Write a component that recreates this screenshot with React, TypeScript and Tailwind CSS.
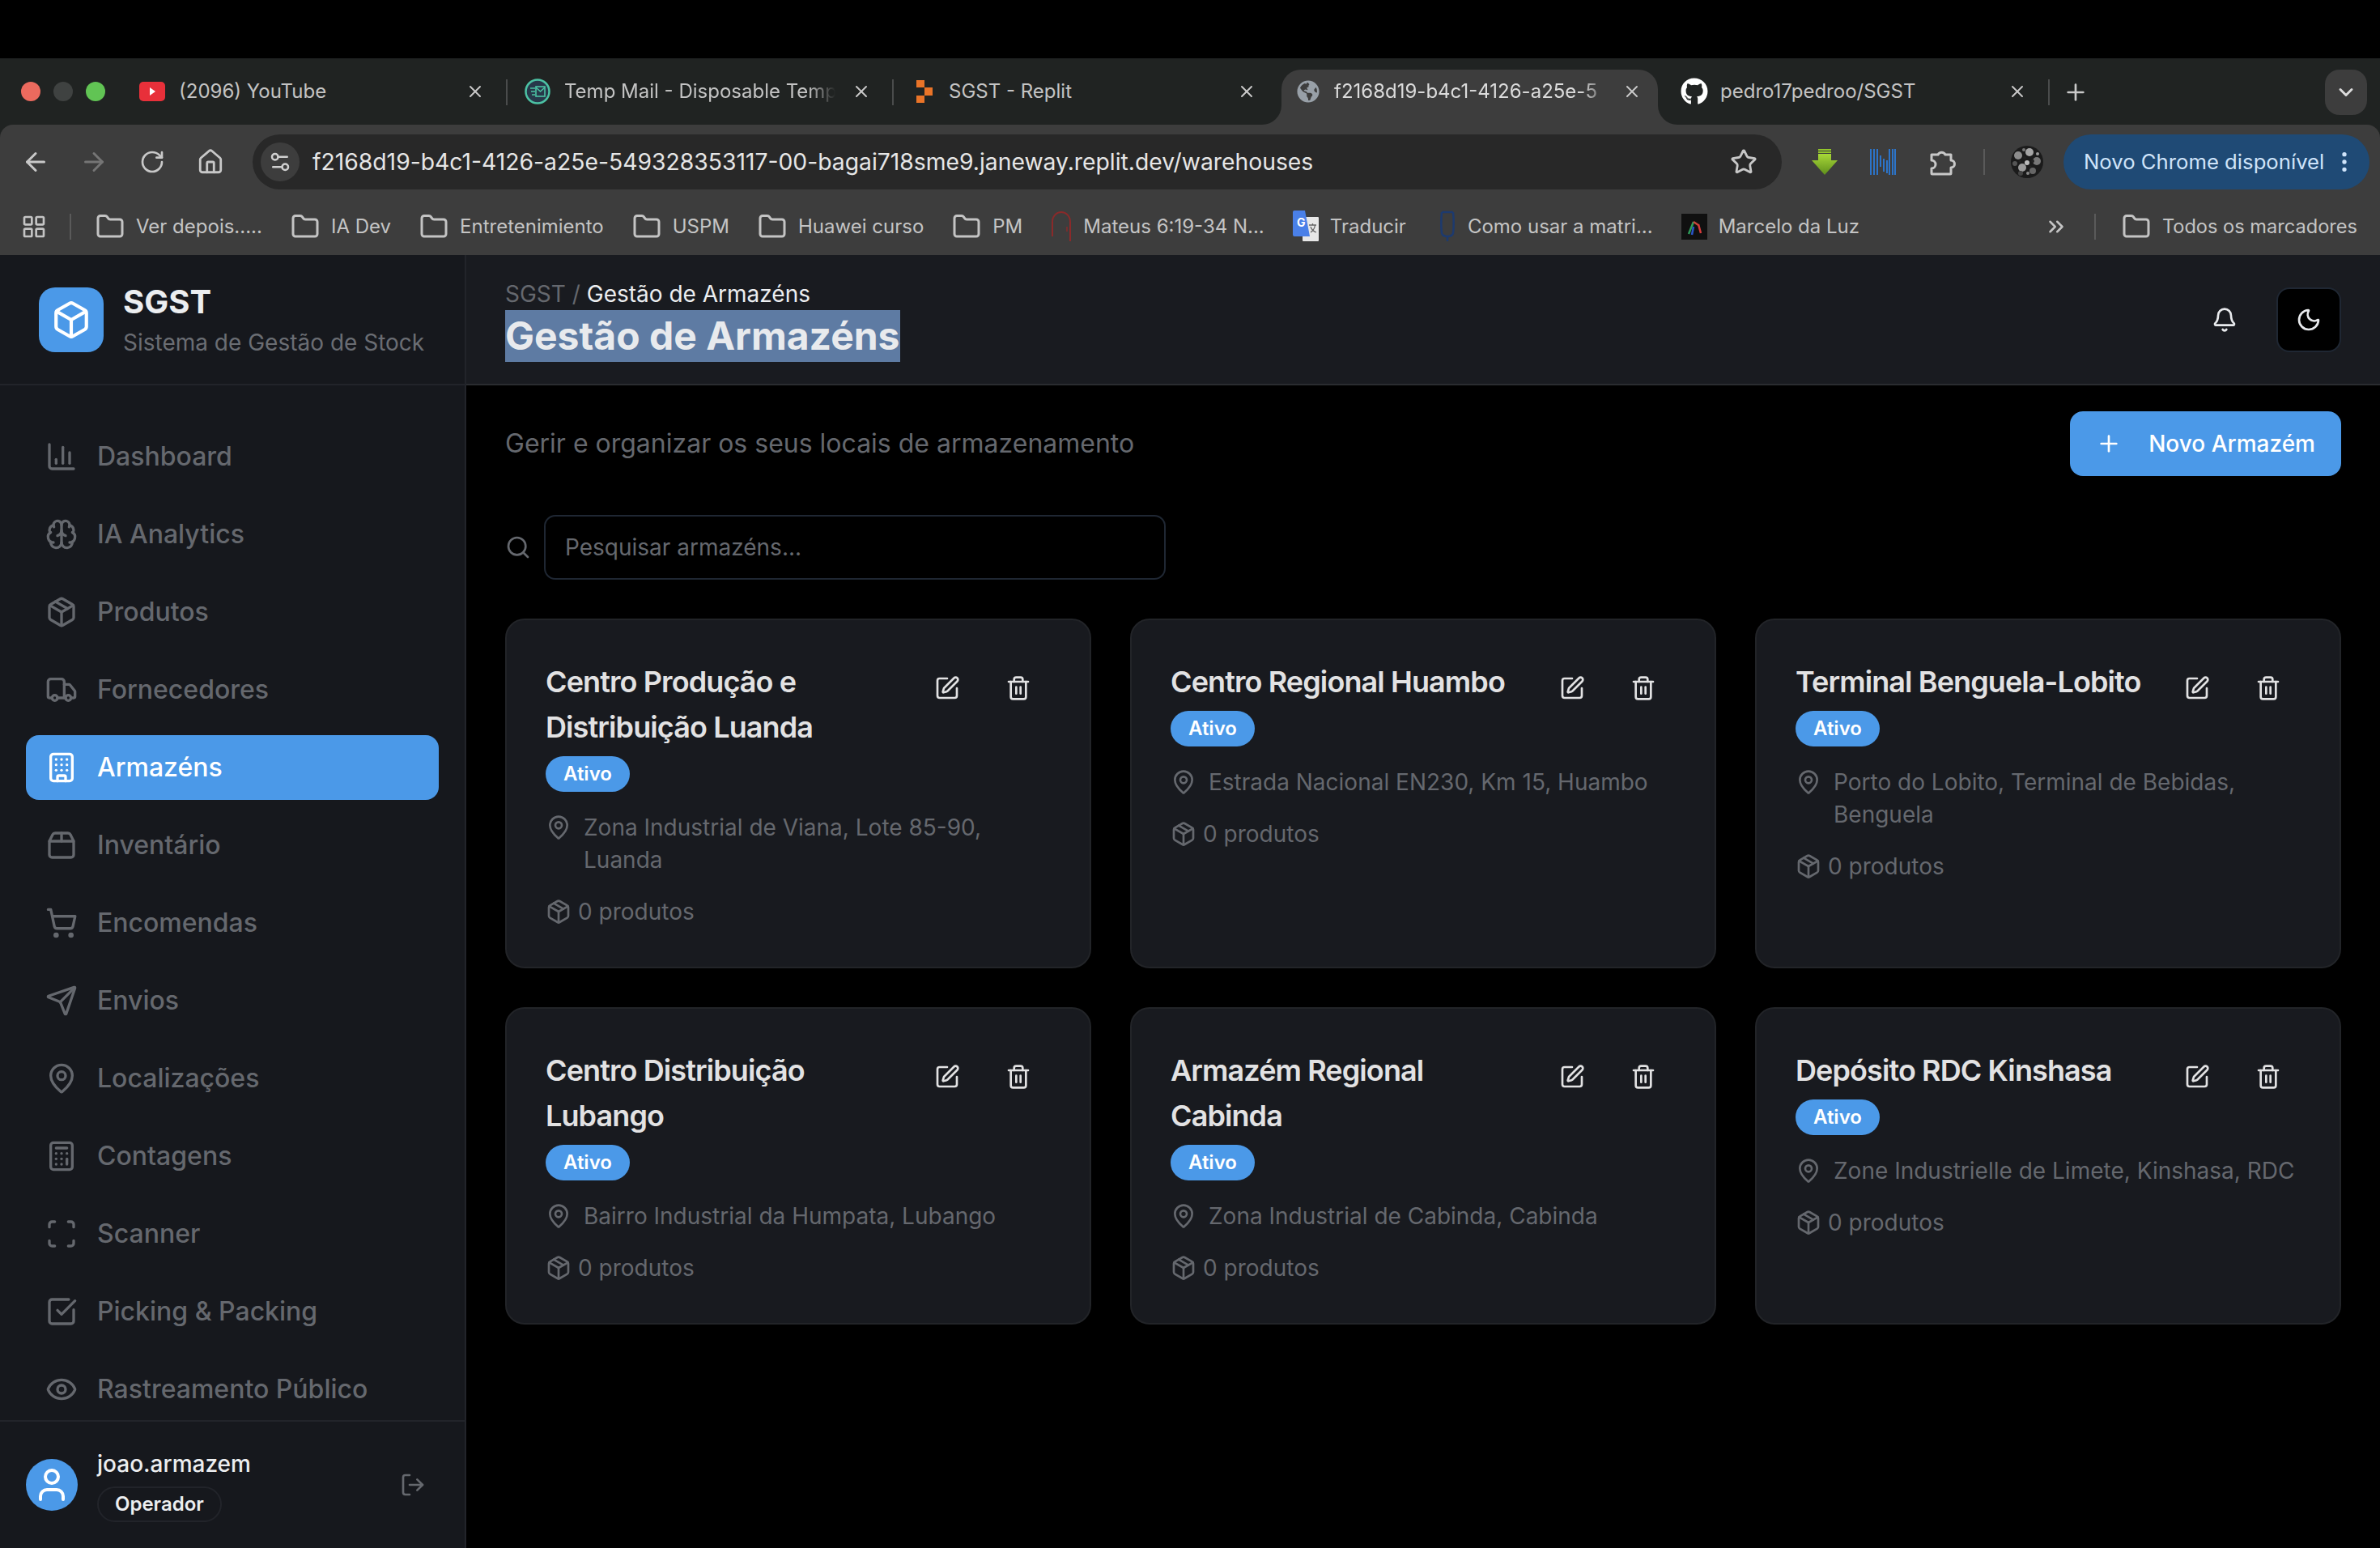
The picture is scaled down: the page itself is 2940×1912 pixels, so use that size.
import React from 'react';
import {
  ArrowLeft, ArrowRight, RotateCw, Home, Star, X, Plus, ChevronDown, EllipsisVertical,
  LayoutGrid, Folder, ChevronsRight, Settings2, Box,
  ChartColumn, Brain, Package, Truck, Building, Package2, ShoppingCart, Send, MapPin, Calculator, Scan,
  SquareCheckBig, Eye, User, LogOut, Bell, Moon, Search, SquarePen, Trash2,
} from 'lucide-react';
import { FaGithub, FaGlobeAmericas } from 'react-icons/fa';

const chromeFont = "font-['Inter','Noto_Sans',sans-serif]";

// Browser chrome

const YoutubeIcon = () => (
  <svg width="32" height="24" viewBox="0 0 32 24" className="flex-none">
    <rect width="32" height="24" rx="5" fill="#e8303a" />
    <path d="M13 7l7 5-7 5z" fill="#fff" />
  </svg>
);

const TempMailIcon = () => (
  <svg width="32" height="32" viewBox="0 0 32 32" className="flex-none">
    <circle cx="16" cy="16" r="14.5" fill="#27384a" stroke="#4cc2a4" strokeWidth="2.5" />
    <rect x="14" y="10" width="11" height="12" fill="none" stroke="#4cc2a4" strokeWidth="1.6" />
    <path d="M14 11l5.5 5 5.5-5M7 12h6M8 16h5M9 20h4" fill="none" stroke="#4cc2a4" strokeWidth="1.6" />
  </svg>
);

const ReplitIcon = () => (
  <svg width="22" height="30" viewBox="0 0 22 30" className="flex-none">
    <path d="M1 1h10v9H1zM11 10h10v10H11zM1 20h10v9H1z" fill="#ea7428" />
  </svg>
);

const GreenArrow = () => (
  <svg width="32" height="32" viewBox="0 0 32 32">
    <defs>
      <linearGradient id="arrowFill" x1="0" y1="0" x2="0" y2="1">
        <stop offset="0" stopColor="#a8d838" />
        <stop offset="1" stopColor="#5f8f1c" />
      </linearGradient>
    </defs>
    <path d="M8 0h16v2H8zM8 3h16v2H8z" fill="#93c62c" />
    <path d="M8 6h16v8h8L16 32 0 14h8z" fill="url(#arrowFill)" />
  </svg>
);

const NIcon = () => (
  <svg width="32" height="32" viewBox="0 0 32 32" fill="none" stroke="#2c74c9" strokeWidth="2">
    <path d="M1 0v32M5 0v32M9 0v32M13 8v14M17 12v16M21 14v16M24 0v32M28 0v32M31 0v32" />
  </svg>
);

const ExtensionsIcon = () => (
  <svg width="34" height="34" viewBox="0 0 34 34" fill="none" stroke="#c8c8c8" strokeWidth="3" strokeLinejoin="round">
    <path d="M3 8h8a5 5 0 0 1 9 0h7v7a4.500 4.500 0 0 1 0 9v7a1 1 0 0 1-1 1H4a1 1 0 0 1-1-1v-6a5 5 0 0 0 0-10z" />
  </svg>
);

const avatarSpecks = [
  [9, 12, 5, '#8c8c8c'], [23, 8, 5, '#a5a5a5'], [32, 19, 5, '#777'], [14, 27, 5, '#9a9a9a'], [27, 31, 4, '#666'],
  [17, 15, 2, '#222'], [27, 19, 2, '#222'], [5, 22, 3, '#555'], [20, 21, 3, '#bbb'], [12, 34, 3, '#444'],
  [33, 10, 2, '#999'], [16, 5, 2, '#777'], [21, 34, 2, '#888'], [11, 19, 1.5, '#222'], [24, 26, 1.5, '#222'],
] as const;

const ProfileAvatar = () => (
  <svg width="40" height="40" viewBox="0 0 40 40">
    <defs>
      <clipPath id="avatarClip"><circle cx="20" cy="20" r="20" /></clipPath>
    </defs>
    <g clipPath="url(#avatarClip)">
      <rect width="40" height="40" fill="#1b1b1b" />
      {avatarSpecks.map(([cx, cy, r, fill], i) => (
        <circle key={i} cx={cx} cy={cy} r={r} fill={fill} />
      ))}
    </g>
  </svg>
);

const TranslateIcon = () => (
  <svg width="32" height="40" viewBox="0 0 32 40" className="flex-none">
    <rect x="12" y="8" width="20" height="30" rx="1" fill="#e8e8e8" />
    <path d="M0 2a2 2 0 0 1 2-2h13l6 32H2a2 2 0 0 1-2-2z" fill="#4a80e8" />
    <text x="5" y="20" fontSize="14" fontWeight="700" fill="#fff" fontFamily="Inter, sans-serif">G</text>
    <path d="M20 18h9M24.5 16v2M22 27c3-2 5-5 5.500-9M22 20c1 3 4 6 7 7" stroke="#666" strokeWidth="1.300" fill="none" />
  </svg>
);

const RedArc = () => (
  <svg width="26" height="40" viewBox="0 0 26 40" className="flex-none" fill="none">
    <path d="M2 32V14C2 7 7 2 13 2s11 5 11 12v24" stroke="#8a2a2a" strokeWidth="2" />
    <path d="M20 20v6" stroke="#8a2a2a" strokeWidth="1.500" />
  </svg>
);

const BlueMark = () => (
  <svg width="22" height="40" viewBox="0 0 22 40" className="ml-[5px] flex-none" fill="none">
    <path d="M4 2h14M4 2C3 12 3 20 4 28c1 3 4 4 7 4s6-1 7-4c1-8 1-16 0-26M11 32v6" stroke="#1d3a6e" strokeWidth="2.500" />
  </svg>
);

const MarceloIcon = () => (
  <svg width="32" height="32" viewBox="0 0 32 32" className="flex-none">
    <rect width="32" height="32" fill="#101010" />
    <path d="M9 25l6-15" stroke="#2e9c5a" strokeWidth="2.500" />
    <path d="M15 10l6 4" stroke="#c9463a" strokeWidth="2.500" />
    <path d="M21 13l3 11" stroke="#d83c3c" strokeWidth="2.500" />
    <path d="M15 16l-2 10" stroke="#2a55c9" strokeWidth="2.500" />
  </svg>
);

type TabProps = {
  icon: React.ReactNode;
  title: string;
  widthClass: string;
  padClass: string;
  gapClass: string;
  closePadClass: string;
  fade?: boolean;
  active?: boolean;
};

const Tab = ({ icon, title, widthClass, padClass, gapClass, closePadClass, fade, active }: TabProps) => (
  <div className={`relative flex h-[68px] flex-none items-center pb-[14px] ${widthClass} ${padClass} ${active ? 'rounded-t-[24px] bg-[#3d3d3d]' : ''}`}>
    {active && (
      <>
        <div className="absolute bottom-0 left-[-24px] h-[24px] w-[24px] bg-[#3d3d3d]">
          <div className="h-full w-full rounded-br-[24px] bg-[#202322]" />
        </div>
        <div className="absolute bottom-0 right-[-24px] h-[24px] w-[24px] bg-[#3d3d3d]">
          <div className="h-full w-full rounded-bl-[24px] bg-[#202322]" />
        </div>
      </>
    )}
    <div className={`flex min-w-0 flex-1 items-center ${gapClass}`}>
      {icon}
      <span className={`min-w-0 flex-1 whitespace-nowrap text-[24px] leading-[32px] ${active ? 'text-[#dcdcdc]' : 'text-[#c4c4c4]'} ${fade ? '[mask-image:linear-gradient(to_right,black_90%,transparent)]' : ''}`}>
        {title}
      </span>
    </div>
    <X size={24} strokeWidth={2} className={`flex-none text-[#c9c9c9] ${closePadClass}`} />
  </div>
);

const TabSeparator = () => <div className="mb-[24px] h-[32px] w-[2px] flex-none bg-[#4a4c4c]" />;

const TabStrip = () => (
  <div className="flex h-[82px] flex-none items-end bg-[#202322]">
    <div className="flex h-[68px] w-[156px] flex-none items-center pb-[14px] pl-[26px]">
      <div className="h-[24px] w-[24px] rounded-full bg-[#ec6a5e]" />
      <div className="ml-[16px] h-[24px] w-[24px] rounded-full bg-[#3f4241]" />
      <div className="ml-[16px] h-[24px] w-[24px] rounded-full bg-[#61c454]" />
    </div>
    <Tab icon={<YoutubeIcon />} title="(2096) YouTube" widthClass="w-[469px]" padClass="pl-[16px]" gapClass="gap-[17px]" closePadClass="mr-[26px]" />
    <TabSeparator />
    <Tab icon={<TempMailIcon />} title="Temp Mail - Disposable Temp" widthClass="w-[475px]" padClass="pl-[21px]" gapClass="gap-[17px]" closePadClass="ml-[20px] mr-[26px]" fade />
    <TabSeparator />
    <Tab icon={<ReplitIcon />} title="SGST - Replit" widthClass="w-[479px]" padClass="pl-[27px]" gapClass="gap-[19px]" closePadClass="mr-[31px]" />
    <Tab icon={<FaGlobeAmericas size={28} className="flex-none text-[#98a0a8]" />} title="f2168d19-b4c1-4126-a25e-5" widthClass="w-[465px]" padClass="pl-[19px]" gapClass="gap-[18px]" closePadClass="ml-[16px] mr-[20px]" fade active />
    <Tab icon={<FaGithub size={34} className="flex-none text-white" />} title="pedro17pedroo/SGST" widthClass="w-[482px]" padClass="pl-[28px]" gapClass="gap-[15px]" closePadClass="mr-[26px]" />
    <TabSeparator />
    <Plus size={32} strokeWidth={2} className="mb-[24px] ml-[16px] flex-none text-[#c9c9c9]" />
    <div className="mb-[12px] ml-auto mr-[16px] flex h-[56px] w-[52px] flex-none items-center justify-center rounded-[18px] bg-[#3d3d3d]">
      <ChevronDown size={28} strokeWidth={2.500} className="text-[#dcdcdc]" />
    </div>
  </div>
);

const AddressRow = () => (
  <div className="flex h-[68px] items-center pl-[26px] pr-[12px]">
    <ArrowLeft size={36} className="flex-none text-[#c8c8c8]" />
    <ArrowRight size={36} className="ml-[36px] flex-none text-[#757575]" />
    <RotateCw size={32} className="ml-[38px] flex-none text-[#c8c8c8]" />
    <Home size={34} className="ml-[39px] flex-none text-[#c8c8c8]" />
    <div className="ml-[35px] flex h-[68px] w-[1889px] flex-none items-center rounded-full bg-[#282828] pl-[10px]">
      <div className="flex h-[48px] w-[48px] flex-none items-center justify-center rounded-full bg-[#3d3d3d]">
        <Settings2 size={30} className="text-[#d0d0d0]" />
      </div>
      <span className="ml-[16px] flex-1 whitespace-nowrap text-[28.3px] text-[#e6e6e6]">
        f2168d19-b4c1-4126-a25e-549328353117-00-bagai718sme9.janeway.replit.dev/warehouses
      </span>
      <Star size={34} className="mr-[30px] flex-none text-[#c8c8c8]" />
    </div>
    <div className="ml-[37px] flex-none"><GreenArrow /></div>
    <div className="ml-[40px] flex-none"><NIcon /></div>
    <div className="ml-[41px] flex-none"><ExtensionsIcon /></div>
    <div className="ml-[33px] h-[32px] w-[2px] flex-none bg-[#5a5a5a]" />
    <div className="ml-[32px] flex-none"><ProfileAvatar /></div>
    <div className="ml-[25px] flex h-[68px] w-[378px] flex-none items-center rounded-full bg-[#1f4a75] pl-[25px]">
      <span className="whitespace-nowrap text-[25.7px] text-[#cfe4fa]">Novo Chrome disponível</span>
      <EllipsisVertical size={32} className="ml-auto mr-[15px] flex-none text-[#cfe4fa]" />
    </div>
  </div>
);

const bookmarks: { icon: React.ReactNode; label: string }[] = [
  { icon: <Folder size={36} />, label: 'Ver depois.....' },
  { icon: <Folder size={36} />, label: 'IA Dev' },
  { icon: <Folder size={36} />, label: 'Entretenimiento' },
  { icon: <Folder size={36} />, label: 'USPM' },
  { icon: <Folder size={36} />, label: 'Huawei curso' },
  { icon: <Folder size={36} />, label: 'PM' },
  { icon: <RedArc />, label: 'Mateus 6:19-34 N...' },
  { icon: <TranslateIcon />, label: 'Traducir' },
  { icon: <BlueMark />, label: 'Como usar a matri...' },
  { icon: <MarceloIcon />, label: 'Marcelo da Luz' },
];

const BookmarksRow = () => (
  <div className="flex h-[81px] items-center pl-[26px] pr-[28px] pt-[10px] text-[#c4c4c4]">
    <LayoutGrid size={32} className="flex-none" />
    <div className="ml-[28px] h-[32px] w-[2px] flex-none bg-[#5a5a5a]" />
    <div className="ml-[30px] flex items-center gap-[35px]">
      {bookmarks.map((b) => (
        <div key={b.label} className="flex flex-none items-center gap-[14px]">
          {b.icon}
          <span className="whitespace-nowrap text-[24px] leading-[32px]">{b.label}</span>
        </div>
      ))}
    </div>
    <ChevronsRight size={30} className="ml-auto flex-none" />
    <div className="ml-[32px] h-[32px] w-[2px] flex-none bg-[#5a5a5a]" />
    <div className="ml-[32px] flex flex-none items-center gap-[14px]">
      <Folder size={36} />
      <span className="whitespace-nowrap text-[23.6px] leading-[32px]">Todos os marcadores</span>
    </div>
  </div>
);

// App

const navItems = [
  { label: 'Dashboard', icon: ChartColumn },
  { label: 'IA Analytics', icon: Brain },
  { label: 'Produtos', icon: Package },
  { label: 'Fornecedores', icon: Truck },
  { label: 'Armazéns', icon: Building, active: true },
  { label: 'Inventário', icon: Package2 },
  { label: 'Encomendas', icon: ShoppingCart },
  { label: 'Envios', icon: Send },
  { label: 'Localizações', icon: MapPin },
  { label: 'Contagens', icon: Calculator },
  { label: 'Scanner', icon: Scan },
  { label: 'Picking & Packing', icon: SquareCheckBig },
  { label: 'Rastreamento Público', icon: Eye },
];

const Sidebar = () => (
  <aside className="flex h-full w-[576px] flex-none flex-col border-r-2 border-[#22242a] bg-[#16181d]">
    <div className="flex h-[161px] flex-none items-center gap-[24px] border-b-2 border-[#22242a] px-[48px]">
      <div className="flex h-[80px] w-[80px] flex-none items-center justify-center rounded-[20px] bg-[#4b99e8]">
        <Box size={50} className="text-white" />
      </div>
      <div className="mt-[2px]">
        <h1 className="text-[40px] font-bold leading-[48px] text-[#eceef0]">SGST</h1>
        <p className="mt-[6px] text-[28px] leading-[40px] text-[#6a6d73]">Sistema de Gestão de Stock</p>
      </div>
    </div>
    <nav className="min-h-0 flex-1 space-y-[16px] overflow-hidden px-[32px] pt-[48px]">
      {navItems.map(({ label, icon: Icon, active }) => (
        <div
          key={label}
          className={`flex h-[80px] items-center gap-[24px] rounded-[16px] px-[24px] text-[32px] font-medium ${active ? 'bg-[#4b99e8] text-white' : 'text-[#65686e]'}`}
        >
          <Icon size={40} className="flex-none" />
          <span className="whitespace-nowrap">{label}</span>
        </div>
      ))}
    </nav>
    <div className="flex h-[158px] flex-none items-center border-t-2 border-[#22242a] px-[32px]">
      <div className="flex h-[64px] w-[64px] flex-none items-center justify-center rounded-full bg-[#4b99e8]">
        <User size={48} className="text-white" />
      </div>
      <div className="ml-[24px] min-w-0 flex-1">
        <p className="text-[28px] font-medium leading-[40px] text-[#eceef0]">joao.armazem</p>
        <span className="mt-[8px] inline-flex h-[44px] items-center rounded-full border-2 border-[#22242a] px-[20px] text-[24px] font-semibold text-[#eceef0]">Operador</span>
      </div>
      <LogOut size={32} className="mr-[16px] flex-none text-[#65686e]" />
    </div>
  </aside>
);

type Warehouse = { name: string; address: string };

const warehouses: Warehouse[] = [
  { name: 'Centro Produção e Distribuição Luanda', address: 'Zona Industrial de Viana, Lote 85-90, Luanda' },
  { name: 'Centro Regional Huambo', address: 'Estrada Nacional EN230, Km 15, Huambo' },
  { name: 'Terminal Benguela-Lobito', address: 'Porto do Lobito, Terminal de Bebidas, Benguela' },
  { name: 'Centro Distribuição Lubango', address: 'Bairro Industrial da Humpata, Lubango' },
  { name: 'Armazém Regional Cabinda', address: 'Zona Industrial de Cabinda, Cabinda' },
  { name: 'Depósito RDC Kinshasa', address: 'Zone Industrielle de Limete, Kinshasa, RDC' },
];

const WarehouseCard = ({ name, address }: Warehouse) => (
  <div className="rounded-[24px] border-2 border-[#222428] bg-[#181a1f] p-[48px]">
    <div className="flex items-start gap-[16px]">
      <h3 className="min-w-0 flex-1 text-[36px] font-semibold leading-[56px] tracking-[-0.9px] text-[#e2e2e3]">{name}</h3>
      {/* buttons are taller than one title line but must not push the badge down */}
      <div className="mb-[-16px] flex flex-none gap-[8px] text-[#e2e2e3]">
        <div className="flex h-[72px] w-[80px] items-center justify-center"><SquarePen size={32} /></div>
        <div className="flex h-[72px] w-[80px] items-center justify-center"><Trash2 size={32} /></div>
      </div>
    </div>
    <span className="mt-[8px] inline-flex h-[44px] items-center rounded-full bg-[#4b99e8] px-[22px] text-[24px] font-semibold text-white">Ativo</span>
    <div className="mt-[24px] flex items-start gap-[15px] text-[#65686e]">
      <MapPin size={32} className="mt-[4px] flex-none" />
      <p className="text-[28px] leading-[40px]">{address}</p>
    </div>
    <div className="mt-[24px] flex items-center gap-[8px] text-[#65686e]">
      <Package size={32} className="flex-none" />
      <span className="text-[28px] leading-[40px]">0 produtos</span>
    </div>
  </div>
);

const Main = () => (
  <main className="flex min-w-0 flex-1 flex-col bg-black">
    <header className="flex h-[161px] flex-none items-center justify-between border-b-2 border-[#2a2c30] bg-[#191b20] pl-[48px] pr-[48px]">
      <div className="pt-[2px]">
        <p className="text-[28px] leading-[36px] text-[#65686e]">
          SGST / <span className="text-[#eceef0]">Gestão de Armazéns</span>
        </p>
        <h2 className="mt-[2px]">
          <span className="inline-block bg-[#5e7ba3] text-[48px] font-bold leading-[64px] text-[#e8eaed]">Gestão de Armazéns</span>
        </h2>
      </div>
      <div className="flex items-center gap-[24px]">
        <div className="flex h-[80px] w-[80px] items-center justify-center">
          <Bell size={32} className="text-[#e8eaed]" />
        </div>
        <div className="flex h-[80px] w-[80px] items-center justify-center rounded-[16px] border-2 border-[#1f2733] bg-black">
          <Moon size={32} className="text-[#e8eaed]" />
        </div>
      </div>
    </header>
    <div className="flex min-h-0 flex-1 flex-col gap-[48px] px-[48px] pt-[32px]">
      <div className="flex items-center justify-between">
        <p className="text-[32px] text-[#65686e]">Gerir e organizar os seus locais de armazenamento</p>
        <div className="flex h-[80px] items-center rounded-[16px] bg-[#4b99e8] pl-[32px] pr-[32px] text-[28px] font-medium text-white">
          <Plus size={32} className="mr-[33px]" />
          Novo Armazém
        </div>
      </div>
      <div className="flex items-center gap-[16px]">
        <Search size={32} className="flex-none text-[#65686e]" />
        <div className="flex h-[80px] w-[768px] items-center rounded-[14px] border-2 border-[#1f2733] px-[24px] text-[28px] text-[#65686e]">
          Pesquisar armazéns...
        </div>
      </div>
      <div className="grid grid-cols-3 gap-[48px]">
        {warehouses.map((w) => (
          <WarehouseCard key={w.name} {...w} />
        ))}
      </div>
    </div>
  </main>
);

const App: React.FC = () => (
  <div className={`flex h-[1912px] w-[2940px] flex-col overflow-hidden bg-black ${chromeFont}`}>
    <div className="h-[72px] flex-none bg-black" />
    <TabStrip />
    <div className="flex-none bg-[#202322]">
      <div className="h-[161px] rounded-t-[16px] bg-[#3d3d3d] pt-[12px]">
        <AddressRow />
        <BookmarksRow />
      </div>
    </div>
    <div className="flex min-h-0 flex-1">
      <Sidebar />
      <Main />
    </div>
  </div>
);

export default App;
